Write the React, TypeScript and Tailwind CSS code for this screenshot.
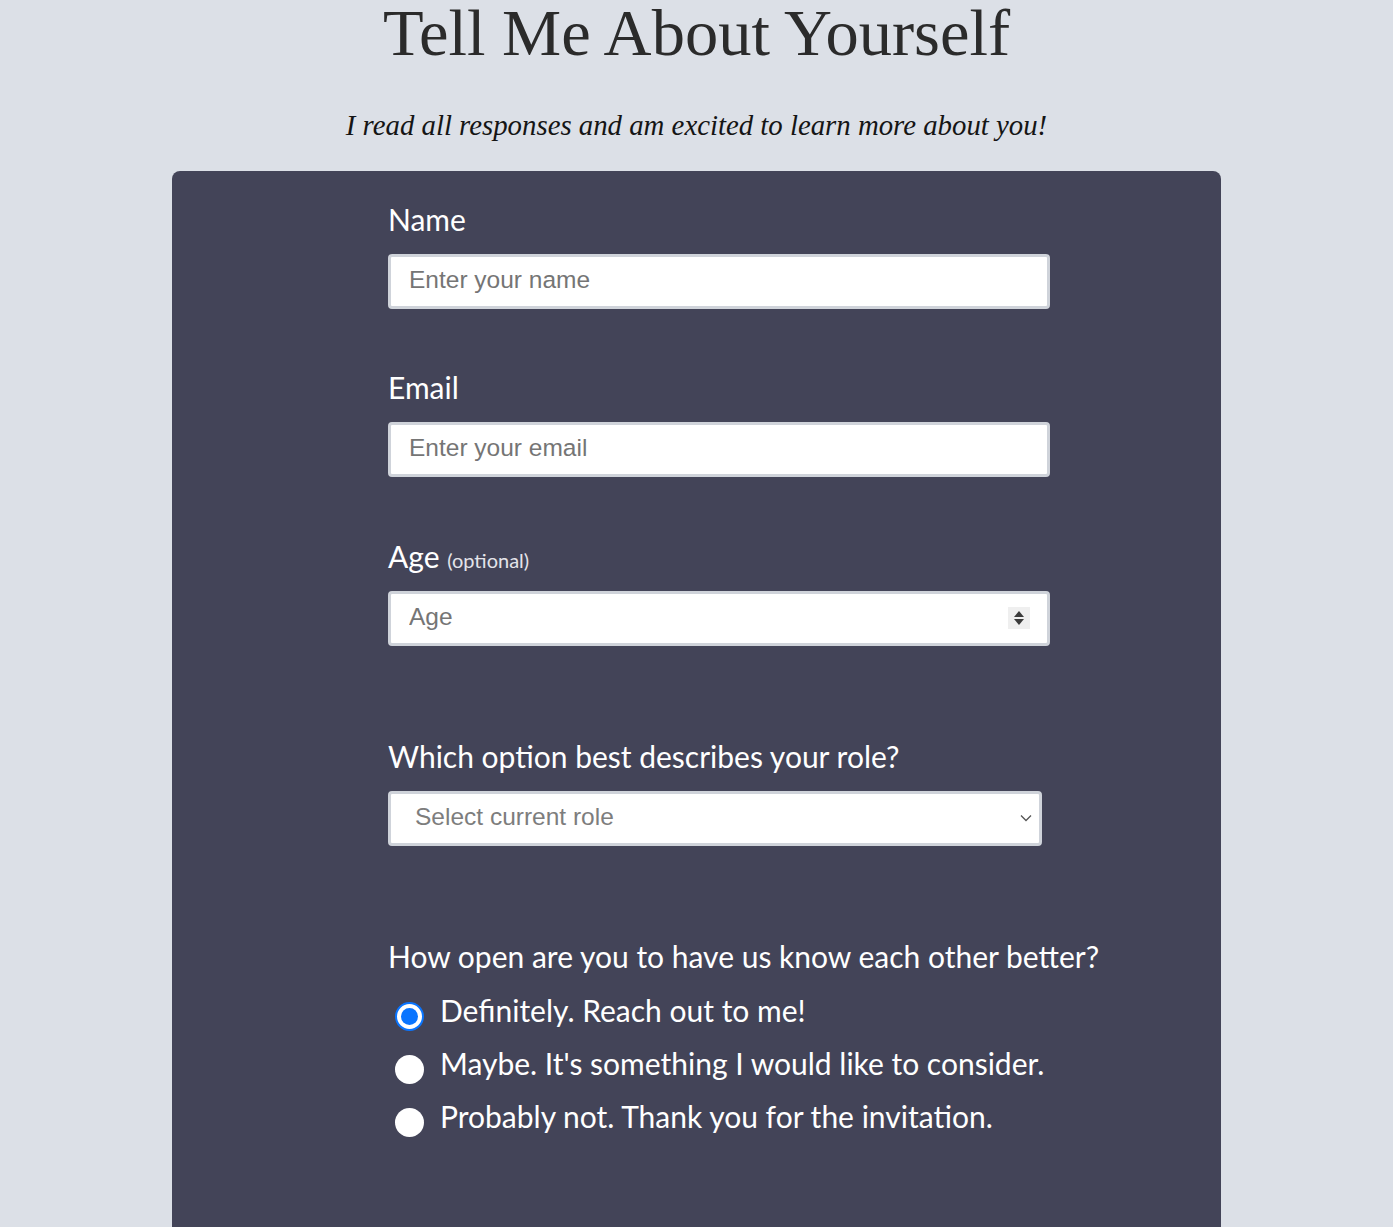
import { useState } from 'react';

const labelFont = { fontFamily: 'Lato, "Noto Sans", sans-serif' };

const options = [
  'Definitely. Reach out to me!',
  "Maybe. It's something I would like to consider.",
  'Probably not. Thank you for the invitation.',
];

export default function App() {
  const [choice, setChoice] = useState(0);

  return (
    <div className="min-h-screen bg-[#dce0e7] overflow-hidden">
      <h1 className="text-center text-[66.5px] leading-[65px] text-[#2b2b2b] font-['Liberation_Serif',serif]">
        Tell Me About Yourself
      </h1>
      <p className="mt-[46px] text-center text-[28.8px] leading-[28px] italic text-[#151515] font-['Liberation_Serif',serif]">
        I read all responses and am excited to learn more about you!
      </p>

      {/* Form card */}
      <div className="mx-auto mt-[32px] w-[1049px] rounded-lg bg-[#434458] pt-[31px] pb-[120px] pl-[216px]">
        <form className="flex flex-col text-white" style={labelFont}>
          <label className="h-[35px] text-[30px] leading-[35px]">Name</label>
          <input
            type="text"
            placeholder="Enter your name"
            className="mt-[17px] h-[55px] w-[662px] rounded border-[3px] border-[#cfd3da] bg-white px-[18px] pb-[3px] text-[24.5px] text-[#333] placeholder:text-[#757575] outline-none font-['Liberation_Sans',sans-serif]"
          />

          <label className="mt-[61px] h-[35px] text-[30px] leading-[35px]">Email</label>
          <input
            type="email"
            placeholder="Enter your email"
            className="mt-[17px] h-[55px] w-[662px] rounded border-[3px] border-[#cfd3da] bg-white px-[18px] pb-[3px] text-[24.5px] text-[#333] placeholder:text-[#757575] outline-none font-['Liberation_Sans',sans-serif]"
          />

          <label className="mt-[62px] h-[35px] text-[30px] leading-[35px]">
            Age <span className="text-[20px] text-[#e4e4ea]">(optional)</span>
          </label>
          <div className="relative mt-[17px] w-[662px]">
            <input
              type="text"
              placeholder="Age"
              className="h-[55px] w-full rounded border-[3px] border-[#cfd3da] bg-white px-[18px] pb-[3px] text-[24.5px] text-[#333] placeholder:text-[#757575] outline-none font-['Liberation_Sans',sans-serif]"
            />
            {/* number spinner */}
            <div className="absolute right-[20px] top-[16px] flex h-[22px] w-[22px] flex-col items-center justify-center gap-[2px] bg-[#efefef]">
              <svg width="10" height="6" viewBox="0 0 10 6"><path d="M5 0L10 6H0z" fill="#3b3b3b" /></svg>
              <svg width="10" height="6" viewBox="0 0 10 6"><path d="M0 0H10L5 6z" fill="#3b3b3b" /></svg>
            </div>
          </div>

          <label className="mt-[93px] h-[35px] text-[30px] leading-[35px]">Which option best describes your role?</label>
          <div className="relative mt-[17px] w-[654px]">
            <select
              defaultValue=""
              className="h-[55px] w-full appearance-none rounded border-[3px] border-[#cfd3da] bg-white pl-[24px] pb-[3px] text-[24.5px] text-[#7d7d7d] outline-none font-['Liberation_Sans',sans-serif]"
            >
              <option value="" disabled>Select current role</option>
              <option>Student</option>
              <option>Full-time job</option>
              <option>Full-time learner</option>
              <option>Prefer not to say</option>
              <option>Other</option>
            </select>
            <svg
              className="pointer-events-none absolute right-[10px] top-[23px]"
              width="12"
              height="8"
              viewBox="0 0 12 8"
              fill="none"
              stroke="#555"
              strokeWidth="1.3"
            >
              <path d="M1 1.5L6 6.5L11 1.5" />
            </svg>
          </div>

          <label className="mt-[93px] h-[35px] text-[30px] leading-[35px]">How open are you to have us know each other better?</label>
          <div className="mt-[10px] flex flex-col">
            {options.map((opt, i) => (
              <label key={opt} className="flex h-[53px] items-center cursor-pointer" onClick={() => setChoice(i)}>
                <span
                  className={
                    choice === i
                      ? 'ml-[7px] mt-[12px] flex h-[29px] w-[29px] items-center justify-center rounded-full border-2 border-[#0a75ff] bg-white'
                      : 'ml-[7px] mt-[12px] h-[29px] w-[29px] rounded-full bg-white'
                  }
                >
                  {choice === i && <span className="h-[17px] w-[17px] rounded-full bg-[#0a75ff]" />}
                </span>
                <span className="ml-[16px] text-[30px] leading-[35px]">{opt}</span>
              </label>
            ))}
          </div>
        </form>
      </div>
    </div>
  );
}
